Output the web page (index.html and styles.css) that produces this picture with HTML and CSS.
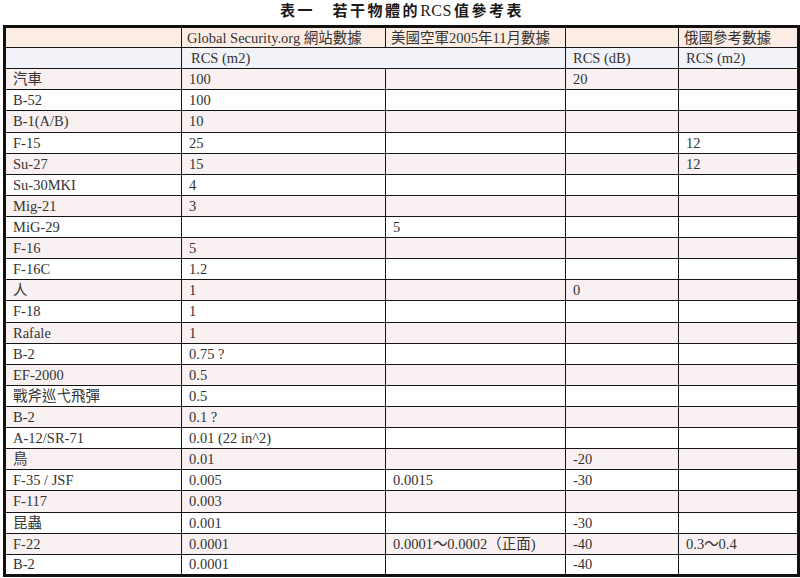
FILE: index.html
```html
<!DOCTYPE html>
<html lang="zh-Hant">
<head>
<meta charset="utf-8">
<title>表一 若干物體的RCS值參考表</title>
<link rel="stylesheet" href="styles.css">
</head>
<body>
<h1 class="title">表一　若干物體的<span class="latin">RCS</span>值參考表</h1>
<table class="rcs">
  <colgroup>
    <col class="c1"><col class="c2"><col class="c3"><col class="c4"><col class="c5">
  </colgroup>
  <tr class="head1">
    <td></td><td class="gs">Global Security.org 網站數據</td><td>美國空軍2005年11月數據</td><td></td><td>俄國參考數據</td>
  </tr>
  <tr class="head2">
    <td></td><td colspan="2">RCS (m2)</td><td>RCS (dB)</td><td>RCS (m2)</td>
  </tr>
  <tr class="odd"><td>汽車</td><td>100</td><td></td><td>20</td><td></td></tr>
  <tr><td>B-52</td><td>100</td><td></td><td></td><td></td></tr>
  <tr class="odd"><td>B-1(A/B)</td><td>10</td><td></td><td></td><td></td></tr>
  <tr><td>F-15</td><td>25</td><td></td><td></td><td>12</td></tr>
  <tr class="odd"><td>Su-27</td><td>15</td><td></td><td></td><td>12</td></tr>
  <tr><td>Su-30MKI</td><td>4</td><td></td><td></td><td></td></tr>
  <tr class="odd"><td>Mig-21</td><td>3</td><td></td><td></td><td></td></tr>
  <tr><td>MiG-29</td><td></td><td>5</td><td></td><td></td></tr>
  <tr class="odd"><td>F-16</td><td>5</td><td></td><td></td><td></td></tr>
  <tr><td>F-16C</td><td>1.2</td><td></td><td></td><td></td></tr>
  <tr class="odd"><td>人</td><td>1</td><td></td><td>0</td><td></td></tr>
  <tr><td>F-18</td><td>1</td><td></td><td></td><td></td></tr>
  <tr class="odd"><td>Rafale</td><td>1</td><td></td><td></td><td></td></tr>
  <tr><td>B-2</td><td>0.75 ?</td><td></td><td></td><td></td></tr>
  <tr class="odd"><td>EF-2000</td><td>0.5</td><td></td><td></td><td></td></tr>
  <tr><td>戰斧巡弋飛彈</td><td>0.5</td><td></td><td></td><td></td></tr>
  <tr class="odd"><td>B-2</td><td>0.1 ?</td><td></td><td></td><td></td></tr>
  <tr><td>A-12/SR-71</td><td>0.01 (22 in^2)</td><td></td><td></td><td></td></tr>
  <tr class="odd"><td>鳥</td><td>0.01</td><td></td><td>-20</td><td></td></tr>
  <tr><td>F-35 / JSF</td><td>0.005</td><td>0.0015</td><td>-30</td><td></td></tr>
  <tr class="odd"><td>F-117</td><td>0.003</td><td></td><td></td><td></td></tr>
  <tr><td>昆蟲</td><td>0.001</td><td></td><td>-30</td><td></td></tr>
  <tr class="odd"><td>F-22</td><td>0.0001</td><td>0.0001～0.0002（正面)</td><td>-40</td><td>0.3～0.4</td></tr>
  <tr><td>B-2</td><td>0.0001</td><td></td><td>-40</td><td></td></tr>
</table>
</body>
</html>
```

FILE: styles.css
```css
html, body {
  margin: 0;
  padding: 0;
  background: #ffffff;
}

body {
  font-family: "Liberation Serif", "Noto Sans CJK TC", serif;
  color: #333333;
}

.title {
  margin: 0;
  height: 25px;
  box-sizing: border-box;
  padding-top: 1px;
  text-align: center;
  font-size: 15px;
  line-height: 20px;
  font-weight: bold;
  letter-spacing: 2.5px;
  color: #1a1a1a;
  padding-left: 4px;
}

.title .latin {
  letter-spacing: 0.5px;
  margin-right: 2px;
  font-weight: normal;
  font-size: 16px;
}

.rcs {
  margin-left: 3px;
  width: 794px;
  border-collapse: collapse;
  table-layout: fixed;
  border: 3px solid #111111;
  font-size: 14.5px;
}

.c1 { width: 177px; }
.c2 { width: 204px; }
.c3 { width: 180px; }
.c4 { width: 113px; }
.c5 { width: 120px; }

.rcs tr {
  height: 21.12px;
  background: #ffffff;
}

.rcs td {
  border: 1.5px solid #151515;
  padding: 0 0 0 7px;
  line-height: 18px;
  white-space: nowrap;
  overflow: hidden;
  vertical-align: middle;
}

.rcs tr.head1 {
  background: #fcede4;
}

.rcs tr.head1 td {
  padding-left: 5px;
}

.rcs tr.head2 {
  background: #f2f2f9;
}

.rcs tr.head2 td:nth-child(2) {
  padding-left: 9px;
}

.rcs tr.odd {
  background: #f9f1f1;
}
```
